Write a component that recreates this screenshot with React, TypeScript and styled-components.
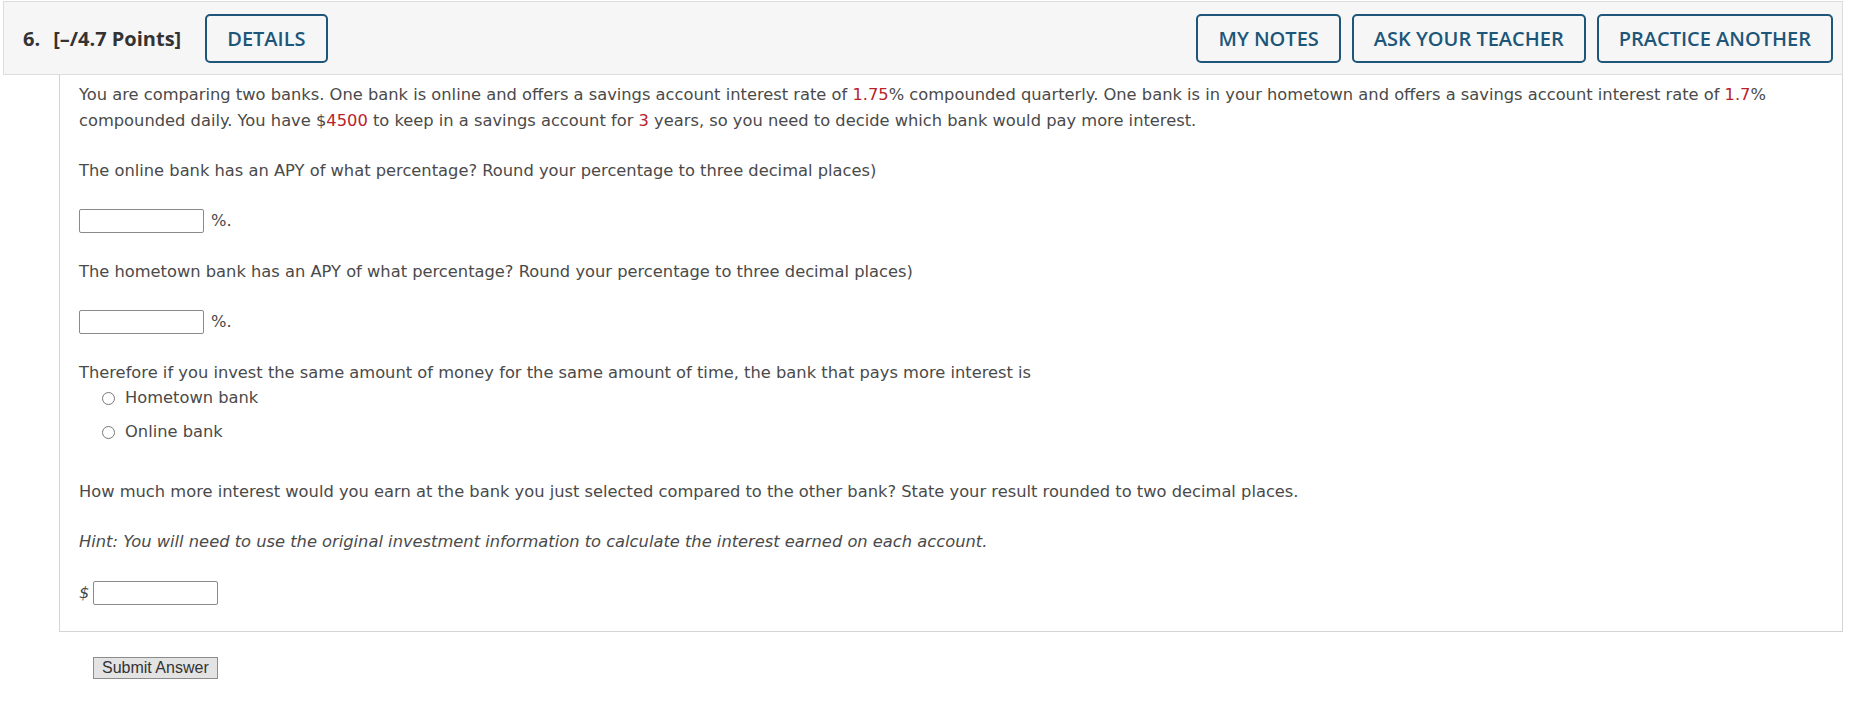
import styled, { createGlobalStyle } from 'styled-components'

// ── Global ─────────────────────────────────────────────────────────────────────

const GlobalStyle = createGlobalStyle`
  html, body {
    margin: 0;
    padding: 0;
    background: #ffffff;
  }
  * {
    box-sizing: border-box;
  }
`

const Page = styled.div`
  padding: 1px 18px 0 3px;
  width: 1861px;
`

// ── Header ─────────────────────────────────────────────────────────────────────

const Header = styled.div`
  height: 74px;
  background: #f6f6f6;
  border: 1px solid #dddddd;
  display: flex;
  align-items: center;
  padding: 0 9px 0 19px;
`

const QuestionNumber = styled.div`
  font-family: 'Open Sans', sans-serif;
  font-weight: 700;
  font-size: 20px;
  color: #333333;
  display: flex;
  gap: 13px;
  margin-right: 24px;
  white-space: nowrap;
`

const HeaderActions = styled.div`
  margin-left: auto;
  display: flex;
  gap: 11px;
`

const OutlineButton = styled.button`
  height: 49px;
  padding: 0 20px;
  background: transparent;
  border: 2px solid #1d5679;
  border-radius: 5px;
  color: #1d5679;
  font-family: 'Open Sans', sans-serif;
  font-weight: 600;
  font-size: 20px;
  white-space: nowrap;
  cursor: pointer;
`

// ── Question body ──────────────────────────────────────────────────────────────

const Panel = styled.div`
  margin-left: 56px;
  border: 1px solid #d4d4d4;
  border-top: none;
  padding: 7px 19px 25px 19px;
  font-family: 'DejaVu Sans', Verdana, sans-serif;
  font-size: 16.3px;
  line-height: 26px;
  color: #4a4a4a;
`

const Para = styled.p<{ $gap?: number }>`
  margin: 0 0 ${({ $gap }) => $gap ?? 24}px 0;
`

const Hint = styled(Para)`
  font-style: italic;
`

const Red = styled.span`
  color: #b8232b;
`

const AnswerRow = styled.div<{ $gap?: number }>`
  display: flex;
  align-items: center;
  height: 26px;
  margin-bottom: ${({ $gap }) => $gap ?? 25}px;
`

const AnswerBox = styled.input`
  width: 125px;
  height: 24px;
  border: 1px solid #8a8a8a;
  border-radius: 2px;
  background: #ffffff;
  padding: 0 4px;
  font: inherit;
  outline: none;
`

const Unit = styled.span`
  margin-left: 7px;
`

const Currency = styled.span`
  font-style: italic;
  margin-right: 4px;
`

const ChoiceList = styled.div`
  display: flex;
  flex-direction: column;
  gap: 8px;
  padding-left: 23px;
  margin: -1px 0 34px 0;
`

const Choice = styled.label`
  display: flex;
  align-items: center;
  height: 26px;
  gap: 10px;
  cursor: pointer;
`

const RadioDot = styled.span`
  width: 13px;
  height: 13px;
  border-radius: 50%;
  border: 1px solid #777777;
  background: #ffffff;
  flex-shrink: 0;
`

const SubmitRow = styled.div`
  padding: 25px 0 0 90px;
`

const SubmitButton = styled.button`
  height: 22px;
  padding: 0 8px;
  font-family: 'Liberation Sans', Arial, sans-serif;
  font-size: 16px;
  line-height: 18px;
  color: #333333;
  background: #e3e3e3;
  border: 1px solid #8c8c8c;
  border-radius: 0;
  cursor: pointer;
`

// ── Page ───────────────────────────────────────────────────────────────────────

export default function App() {
  return (
    <>
      <GlobalStyle />
      <Page>
        <Header>
          <QuestionNumber>
            <span>6.</span>
            <span>[–/4.7 Points]</span>
          </QuestionNumber>
          <OutlineButton>DETAILS</OutlineButton>
          <HeaderActions>
            <OutlineButton>MY NOTES</OutlineButton>
            <OutlineButton>ASK YOUR TEACHER</OutlineButton>
            <OutlineButton>PRACTICE ANOTHER</OutlineButton>
          </HeaderActions>
        </Header>

        <Panel>
          <Para>
            You are comparing two banks. One bank is online and offers a savings account interest rate
            of <Red>1.75</Red>% compounded quarterly. One bank is in your hometown and offers a savings
            account interest rate of <Red>1.7</Red>% compounded daily. You have $<Red>4500</Red> to keep
            in a savings account for <Red>3</Red> years, so you need to decide which bank would pay more
            interest.
          </Para>

          <Para>
            The online bank has an APY of what percentage? Round your percentage to three decimal places)
          </Para>
          <AnswerRow>
            <AnswerBox type="text" />
            <Unit>%.</Unit>
          </AnswerRow>

          <Para>
            The hometown bank has an APY of what percentage? Round your percentage to three decimal places)
          </Para>
          <AnswerRow>
            <AnswerBox type="text" />
            <Unit>%.</Unit>
          </AnswerRow>

          <Para $gap={0}>
            Therefore if you invest the same amount of money for the same amount of time, the bank that pays
            more interest is
          </Para>
          <ChoiceList>
            <Choice>
              <RadioDot />
              Hometown bank
            </Choice>
            <Choice>
              <RadioDot />
              Online bank
            </Choice>
          </ChoiceList>

          <Para>
            How much more interest would you earn at the bank you just selected compared to the other bank?
            State your result rounded to two decimal places.
          </Para>
          <Hint $gap={25}>
            Hint: You will need to use the original investment information to calculate the interest earned
            on each account.
          </Hint>
          <AnswerRow $gap={0}>
            <Currency>$</Currency>
            <AnswerBox type="text" />
          </AnswerRow>
        </Panel>

        <SubmitRow>
          <SubmitButton>Submit Answer</SubmitButton>
        </SubmitRow>
      </Page>
    </>
  )
}
